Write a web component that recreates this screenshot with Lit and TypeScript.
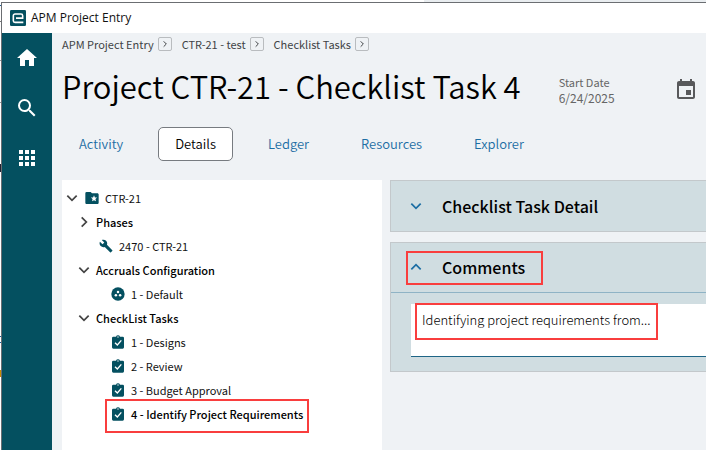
import { LitElement, html, css, svg, nothing } from "lit";
import { customElement, state } from "lit/decorators.js";
import { classMap } from "lit/directives/class-map.js";

type IconName =
  | "home" | "search" | "apps" | "event" | "folder" | "wrench" | "dots" | "task" | "down" | "right" | "up" | "logo";

const icons: Record<IconName, unknown> = {
  home: svg`<path d="M10 20v-6h4v6h5v-8h3L12 3 2 12h3v8z"/>`,
  search: svg`<path d="M15.5 14h-.79l-.28-.27A6.47 6.47 0 0 0 16 9.5 6.5 6.5 0 1 0 9.5 16c1.61 0 3.09-.59 4.23-1.57l.27.28v.79l5 4.99L20.49 19l-4.99-5zm-6 0C7.01 14 5 11.99 5 9.5S7.01 5 9.5 5 14 7.01 14 9.5 11.99 14 9.5 14z"/>`,
  apps: svg`<path d="M4 8h4V4H4v4zm6 12h4v-4h-4v4zm-6 0h4v-4H4v4zm0-6h4v-4H4v4zm6 0h4v-4h-4v4zm6-10v4h4V4h-4zm-6 4h4V4h-4v4zm6 6h4v-4h-4v4zm0 6h4v-4h-4v4z"/>`,
  event: svg`<path d="M17 12h-5v5h5v-5zM16 1v2H8V1H6v2H5c-1.11 0-1.99.9-1.99 2L3 19c0 1.1.89 2 2 2h14c1.1 0 2-.9 2-2V5c0-1.1-.9-2-2-2h-1V1h-2zm3 18H5V8h14v11z"/>`,
  folder: svg`<path fill-rule="evenodd" d="M20 5h-8l-2-2H4a2 2 0 0 0-2 2v14c0 1.100.9 2 2 2h16c1.100 0 2-.9 2-2V7c0-1.100-.9-2-2-2zm-2.060 12L15 15.280 12.060 17l.780-3.330-2.590-2.240 3.410-.290L15 8l1.340 3.140 3.410.290-2.590 2.240z"/>`,
  wrench: svg`<path transform="translate(1.500 1.500) scale(.880)" d="M22.700 19l-9.100-9.100c.9-2.300.4-5-1.500-6.900-2-2-5-2.400-7.400-1.300L9 6 6 9 1.600 4.700C.4 7.100.9 10.100 2.900 12.100c1.900 1.900 4.600 2.400 6.900 1.500l9.100 9.100c.4.4 1 .4 1.400 0l2.300-2.300c.5-.4.5-1.100.1-1.400z"/>`,
  dots: svg`<circle cx="12" cy="12" r="10"/><g fill="#fff"><circle cx="12" cy="9" r="1.900"/><circle cx="8.800" cy="14" r="1.900"/><circle cx="15.200" cy="14" r="1.900"/></g>`,
  task: svg`<path d="M5 4h4a3.200 3.200 0 0 1 6 0h4a2 2 0 0 1 2 2v14a2 2 0 0 1-2 2H5a2 2 0 0 1-2-2V6a2 2 0 0 1 2-2z"/><circle cx="12" cy="4.500" r="1" fill="#fff"/><path d="M7.500 13l3.500 3.500 6-7" fill="none" stroke="#fff" stroke-width="2"/>`,
  down: svg`<path d="M4 8l8 8 8-8" fill="none" stroke="currentColor" stroke-width="3"/>`,
  right: svg`<path d="M8 4l8 8-8 8" fill="none" stroke="currentColor" stroke-width="3"/>`,
  up: svg`<path d="M4 16l8-8 8 8" fill="none" stroke="currentColor" stroke-width="3"/>`,
  logo: svg`<rect width="24" height="24" rx="2" fill="#045060"/><path d="M20 18.500H7.500A2.500 2.500 0 0 1 5 16V8.500A2.500 2.500 0 0 1 7.500 6h9A2.500 2.500 0 0 1 19 8.500v3.700H9" fill="none" stroke="#fff" stroke-width="2.400"/>`,
};

const icon = (name: IconName, cls = "") =>
  html`<svg class="icon ${cls}" viewBox="0 0 24 24" fill="currentColor" aria-hidden="true">${icons[name]}</svg>`;

interface TreeNode {
  label: string;
  level: number;
  chevron?: "down" | "right";
  icon?: IconName;
  strong?: boolean;
  marked?: boolean;
}

const nodes: TreeNode[] = [
  { label: "CTR-21", level: 0, chevron: "down", icon: "folder" },
  { label: "Phases", level: 1, chevron: "right", strong: true },
  { label: "2470 - CTR-21", level: 2, icon: "wrench" },
  { label: "Accruals Configuration", level: 1, chevron: "down", strong: true },
  { label: "1 - Default", level: 3, icon: "dots" },
  { label: "CheckList Tasks", level: 1, chevron: "down", strong: true },
  { label: "1 - Designs", level: 3, icon: "task" },
  { label: "2 - Review", level: 3, icon: "task" },
  { label: "3 - Budget Approval", level: 3, icon: "task" },
  { label: "4 - Identify Project Requirements", level: 3, icon: "task", strong: true, marked: true },
];

const tabs = ["Activity", "Details", "Ledger", "Resources", "Explorer"];
const crumbs = ["APM Project Entry", "CTR-21 - test", "Checklist Tasks"];

@customElement("app-root")
export class AppRoot extends LitElement {
  @state() private tab = "Details";

  static styles = css`
    :host {
      display: block;
      overflow: hidden;
      font-family: "Noto Sans CJK SC", "Open Sans", sans-serif;
      font-size: 11px;
      line-height: 16px;
      color: #111;
    }
    * { box-sizing: border-box; }
    button, input, textarea { font: inherit; color: inherit; margin: 0; padding: 0; border: 0; background: none; }
    button { cursor: pointer; }
    a { color: inherit; text-decoration: none; }
    .icon { display: block; width: 24px; height: 24px; flex: none; }
    .desktop {
      min-height: 100vh;
      display: flex;
      padding: 2px 0 0 1px;
      background:
        linear-gradient(#1a5f9a, #1a5f9a) 0 5px / 1px 1px no-repeat,
        linear-gradient(#777, #777) 0 21px / 1px 1px no-repeat,
        linear-gradient(#999, #999) 0 60px / 1px 1px no-repeat,
        linear-gradient(#999, #999) 0 102px / 1px 1px no-repeat,
        linear-gradient(#223, #223) 0 164px / 1px 8px no-repeat,
        linear-gradient(#1a5f9a, #1a5f9a) 0 336px / 1px 1px no-repeat,
        linear-gradient(#1a5f9a, #1a5f9a) 0 342px / 1px 1px no-repeat,
        linear-gradient(#c78a00, #c78a00) 0 370px / 1px 7px no-repeat,
        linear-gradient(90deg, #fff 60%, #e9edf0 60%) 0 0 / 100% 2px no-repeat,
        #fff;
    }
    .window {
      flex: 1;
      min-width: 0;
      display: flex;
      flex-direction: column;
      border-top: 1px solid #6b6e72;
      border-left: 1px solid #6b6e72;
    }
    .titlebar {
      display: flex;
      align-items: center;
      gap: 5px;
      height: 30px;
      padding-left: 8px;
      background: #fff;
      font-family: "Open Sans", sans-serif;
      font-size: 12px;
    }
    .logo { width: 16px; height: 16px; }
    .body { flex: 1; display: flex; }
    .rail { width: 50px; flex: none; background: #045060; color: #fff; }
    .rail-item { display: flex; width: 50px; height: 50px; align-items: center; justify-content: center; }
    .main { flex: 1; min-width: 0; display: flex; flex-direction: column; background: #eff2f5; padding-left: 10px; }
    .crumbs { display: flex; align-items: center; gap: 10px; padding-top: 3px; color: #404346; }
    .crumb { display: flex; align-items: center; gap: 4px; }
    .chip {
      display: flex;
      align-items: center;
      justify-content: center;
      width: 14px;
      height: 14px;
      border: 1px solid #b9bcbf;
      border-radius: 2px;
    }
    .chip-icon { width: 8px; height: 8px; }
    .header { display: flex; align-items: center; padding: 14px 8px 0 0; }
    h1 { margin: 0 38px 0 0; font-size: 31px; line-height: 40px; font-weight: 350; white-space: nowrap; color: #000; }
    .date { flex: 1; min-width: 0; display: flex; flex-direction: column; padding-top: 8px; color: #666; }
    .date-label { line-height: 15px; }
    .date-input { width: 100%; font-size: 12px; line-height: 15px; height: 15px; }
    .date-button { padding-top: 8px; color: #58595b; }
    .tabs { display: flex; gap: 18px; padding-top: 21px; }
    .tab {
      height: 34px;
      padding: 0 16px;
      border: 1px solid transparent;
      border-radius: 5px;
      font-size: 13px;
      font-weight: 350;
      color: #1c6ea4;
    }
    .tab.active { background: #fff; border-color: #777b80; color: #000; }
    .content { flex: 1; display: flex; gap: 8px; padding-top: 19px; }
    .tree { width: 320px; flex: none; margin: 0; padding: 6px 0 0; background: #fff; list-style: none; }
    .node { position: relative; display: flex; align-items: center; gap: 5px; width: 100%; height: 24px; text-align: left; white-space: nowrap; }
    .level-0 { padding-left: 3px; }
    .level-1 { padding-left: 15px; }
    .level-2 { padding-left: 36px; }
    .level-3 { padding-left: 48px; }
    .strong { font-weight: 500; color: #000; }
    .chevron { width: 14px; height: 14px; color: #444; }
    .glyph { width: 16px; height: 16px; color: #045060; }
    .mark { position: absolute; border: 2px solid #f93e3e; pointer-events: none; }
    .mark-node { left: 43px; top: -3px; width: 204px; height: 34px; }
    .mark-head { left: 15px; top: 8px; width: 137px; height: 34px; }
    .mark-text { left: 4px; top: -1px; width: 243px; height: 37px; }
    .panels { flex: 1; min-width: 0; display: flex; flex-direction: column; gap: 10px; }
    .panel { border: 1px solid #c3c8cb; border-right: 0; background: #d0dde1; }
    h2 { margin: 0; font: inherit; }
    .panel-head {
      position: relative;
      display: flex;
      align-items: center;
      gap: 19px;
      width: 100%;
      height: 50px;
      padding: 0 0 1px 18px;
      font-size: 16px;
      font-weight: 500;
      color: #000;
    }
    .panel-head.open { border-bottom: 1px solid #8fb3c5; }
    .panel-chevron { width: 14px; height: 14px; color: #1c6ea4; }
    .panel-body { padding: 11px 0 14px 20px; }
    .comment { position: relative; display: flex; }
    .comment-text {
      flex: 1;
      min-width: 0;
      height: 53px;
      resize: none;
      overflow: hidden;
      padding: 7px 11px;
      background: #fff;
      border-bottom: 1px solid #1f6586;
      font-size: 13px;
      font-weight: 300;
      line-height: 18px;
      color: #000;
    }
  `;

  render() {
    return html`
      <div class="desktop">
        <div class="window">
          <header class="titlebar">${icon("logo", "logo")}<span>APM Project Entry</span></header>
          <div class="body">
            <nav class="rail" aria-label="Main">
              <button class="rail-item" aria-label="Home">${icon("home")}</button>
              <button class="rail-item" aria-label="Search">${icon("search")}</button>
              <button class="rail-item" aria-label="Apps">${icon("apps")}</button>
            </nav>
            <main class="main">
              <nav class="crumbs" aria-label="Breadcrumb">
                ${crumbs.map((c) => html`
                  <span class="crumb"><a href="#">${c}</a><button class="chip" aria-label="Open ${c}">${icon("right", "chip-icon")}</button></span>`)}
              </nav>
              <div class="header">
                <h1>Project CTR-21 - Checklist Task 4</h1>
                <div class="date">
                  <label class="date-label" for="start">Start Date</label>
                  <input class="date-input" id="start" .value=${"6/24/2025"} />
                </div>
                <button class="date-button" aria-label="Pick a date">${icon("event")}</button>
              </div>
              <div class="tabs" role="tablist">
                ${tabs.map((t) => html`
                  <button role="tab" aria-selected=${t === this.tab} class=${classMap({ tab: true, active: t === this.tab })}
                    @click=${() => (this.tab = t)}>${t}</button>`)}
              </div>
              <div class="content">
                <ul class="tree">
                  ${nodes.map((n) => html`
                    <li>
                      <button class="node level-${n.level} ${n.strong ? "strong" : ""}">
                        ${n.chevron ? icon(n.chevron, "chevron") : nothing}
                        ${n.icon ? icon(n.icon, "glyph") : nothing}
                        <span>${n.label}</span>
                        ${n.marked ? html`<span class="mark mark-node"></span>` : nothing}
                      </button>
                    </li>`)}
                </ul>
                <div class="panels">
                  <section class="panel">
                    <h2><button class="panel-head" aria-expanded="false">${icon("down", "panel-chevron")}Checklist Task Detail</button></h2>
                  </section>
                  <section class="panel">
                    <h2>
                      <button class="panel-head open" aria-expanded="true">
                        ${icon("up", "panel-chevron")}Comments<span class="mark mark-head"></span>
                      </button>
                    </h2>
                    <div class="panel-body">
                      <div class="comment">
                        <textarea class="comment-text" aria-label="Comments" .value=${"Identifying project requirements from..."}></textarea>
                        <span class="mark mark-text"></span>
                      </div>
                    </div>
                  </section>
                </div>
              </div>
            </main>
          </div>
        </div>
      </div>
    `;
  }
}
